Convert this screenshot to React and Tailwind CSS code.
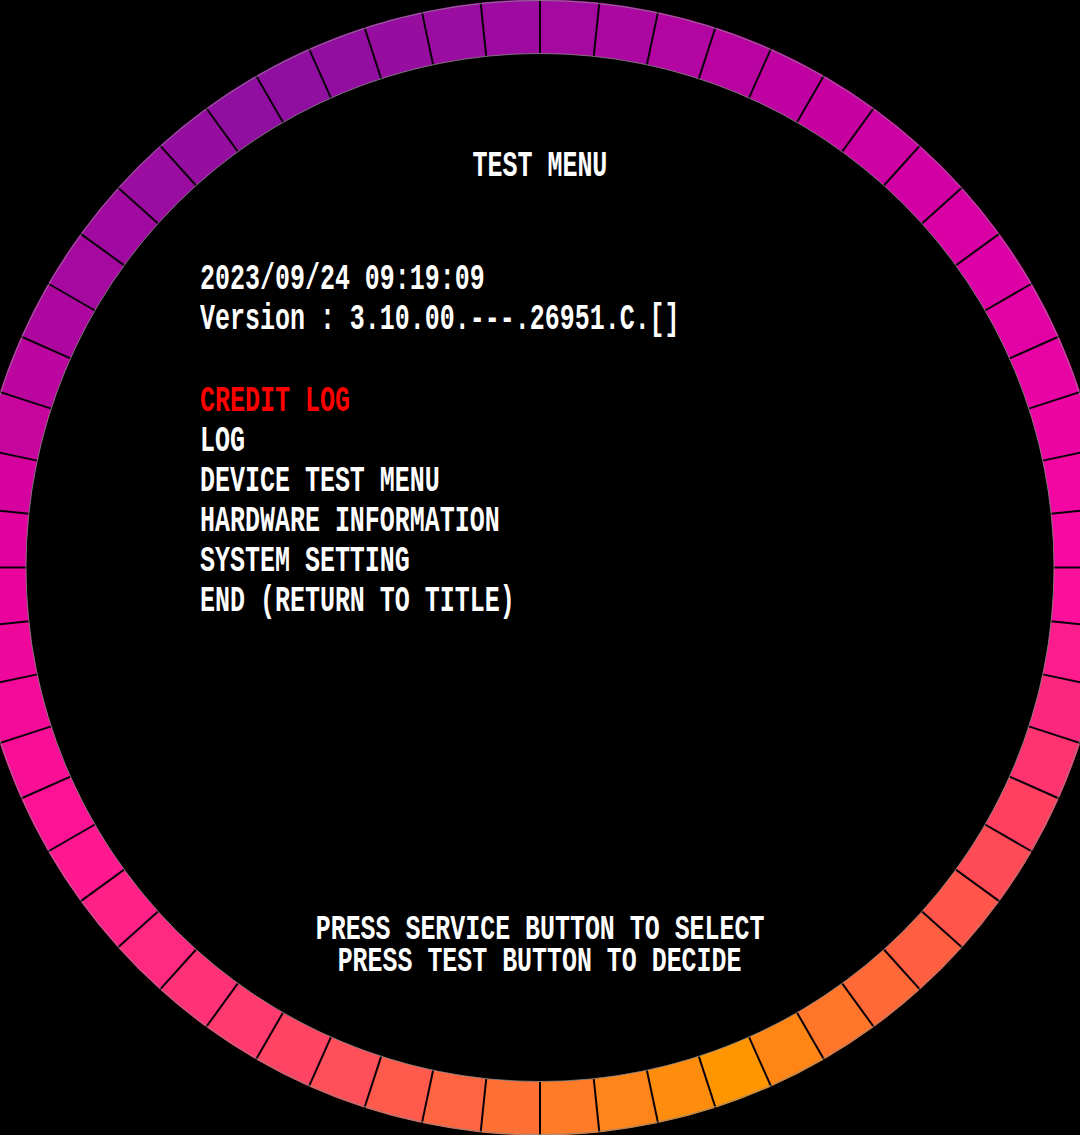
import React from "react";

// ring colours, keyed by angle clockwise from the top
const STOPS = [
  [0, [160, 10, 160]],
  [30, [196, 0, 162]],
  [60, [224, 0, 166]],
  [90, [250, 10, 162]],
  [120, [255, 70, 90]],
  [145, [255, 112, 48]],
  [159, [255, 150, 0]],
  [180, [255, 118, 46]],
  [210, [255, 62, 106]],
  [240, [255, 20, 148]],
  [270, [232, 0, 158]],
  [300, [168, 8, 160]],
  [330, [142, 16, 160]],
  [360, [160, 10, 160]],
];

function colorAt(deg) {
  for (let i = 0; i < STOPS.length - 1; i++) {
    const [a0, c0] = STOPS[i];
    const [a1, c1] = STOPS[i + 1];
    if (deg >= a0 && deg <= a1) {
      const t = (deg - a0) / (a1 - a0);
      const c = c0.map((v, k) => Math.round(v + (c1[k] - v) * t));
      return `rgb(${c[0]},${c[1]},${c[2]})`;
    }
  }
  return "rgb(160,10,160)";
}

const CX = 540;
const CY = 567.5;
const RI = 514;
const RO = 568;
const SEGMENTS = 60;

function pt(r, deg) {
  const a = (deg * Math.PI) / 180;
  return [CX + r * Math.sin(a), CY - r * Math.cos(a)];
}

function Ring() {
  const step = 360 / SEGMENTS;
  const segs = [];
  for (let i = 0; i < SEGMENTS; i++) {
    const a0 = i * step;
    const a1 = a0 + step;
    const [ox0, oy0] = pt(RO, a0);
    const [ox1, oy1] = pt(RO, a1);
    const [ix1, iy1] = pt(RI, a1);
    const [ix0, iy0] = pt(RI, a0);
    const d = `M${ox0} ${oy0} A${RO} ${RO} 0 0 1 ${ox1} ${oy1} L${ix1} ${iy1} A${RI} ${RI} 0 0 0 ${ix0} ${iy0} Z`;
    segs.push(<path key={"s" + i} d={d} fill={colorAt(a0 + step / 2)} />);
  }
  const lines = [];
  for (let i = 0; i < SEGMENTS; i++) {
    const a = i * step;
    const [x0, y0] = pt(RI, a);
    const [x1, y1] = pt(RO, a);
    lines.push(
      <line key={"l" + i} x1={x0} y1={y0} x2={x1} y2={y1} stroke="#0a000a" strokeWidth="2" />
    );
  }
  return (
    <svg
      className="absolute inset-0"
      width="1080"
      height="1135"
      viewBox="0 0 1080 1135"
    >
      {segs}
      {lines}
      <circle cx={CX} cy={CY} r={RI} fill="none" stroke="#8a8a8a" strokeWidth="1" opacity="0.8" />
      <circle cx={CX} cy={CY} r={RO - 1} fill="none" stroke="#8a8a8a" strokeWidth="1" opacity="0.8" />
    </svg>
  );
}

function Line({ children, className = "" }) {
  return (
    <div className={"h-[40px] leading-[40px] whitespace-pre " + className}>
      <span className="inline-block origin-left scale-x-[0.675]">{children}</span>
    </div>
  );
}

function CenterLine({ children }) {
  return (
    <div className="h-[32px] leading-[32px] whitespace-pre text-center text-[35px]">
      <span className="inline-block origin-center scale-x-[0.712]">{children}</span>
    </div>
  );
}

export default function App() {
  const menu = [
    "LOG",
    "DEVICE TEST MENU",
    "HARDWARE INFORMATION",
    "SYSTEM SETTING",
    "END (RETURN TO TITLE)",
  ];

  return (
    <div className="relative w-[1080px] h-[1135px] bg-black overflow-hidden">
      <Ring />

      <div className="relative flex flex-col pt-[146px] text-white font-['Liberation_Mono',monospace] font-bold text-[37px]">
        {/* title */}
        <div className="h-[40px] leading-[40px] text-center whitespace-pre">
          <span className="inline-block origin-center scale-x-[0.675]">TEST MENU</span>
        </div>

        {/* date + version */}
        <div className="mt-[73px] pl-[200px]">
          <Line>2023/09/24 09:19:09</Line>
          <Line>Version : 3.10.00.---.26951.C.[]</Line>
        </div>

        {/* menu items */}
        <div className="mt-[42px] pl-[200px]">
          <Line className="text-[#ff0000]">CREDIT LOG</Line>
          {menu.map((m) => (
            <Line key={m}>{m}</Line>
          ))}
        </div>

        {/* footer */}
        <div className="mt-[293px]">
          <CenterLine>PRESS SERVICE BUTTON TO SELECT</CenterLine>
          <CenterLine>PRESS TEST BUTTON TO DECIDE</CenterLine>
        </div>
      </div>
    </div>
  );
}
